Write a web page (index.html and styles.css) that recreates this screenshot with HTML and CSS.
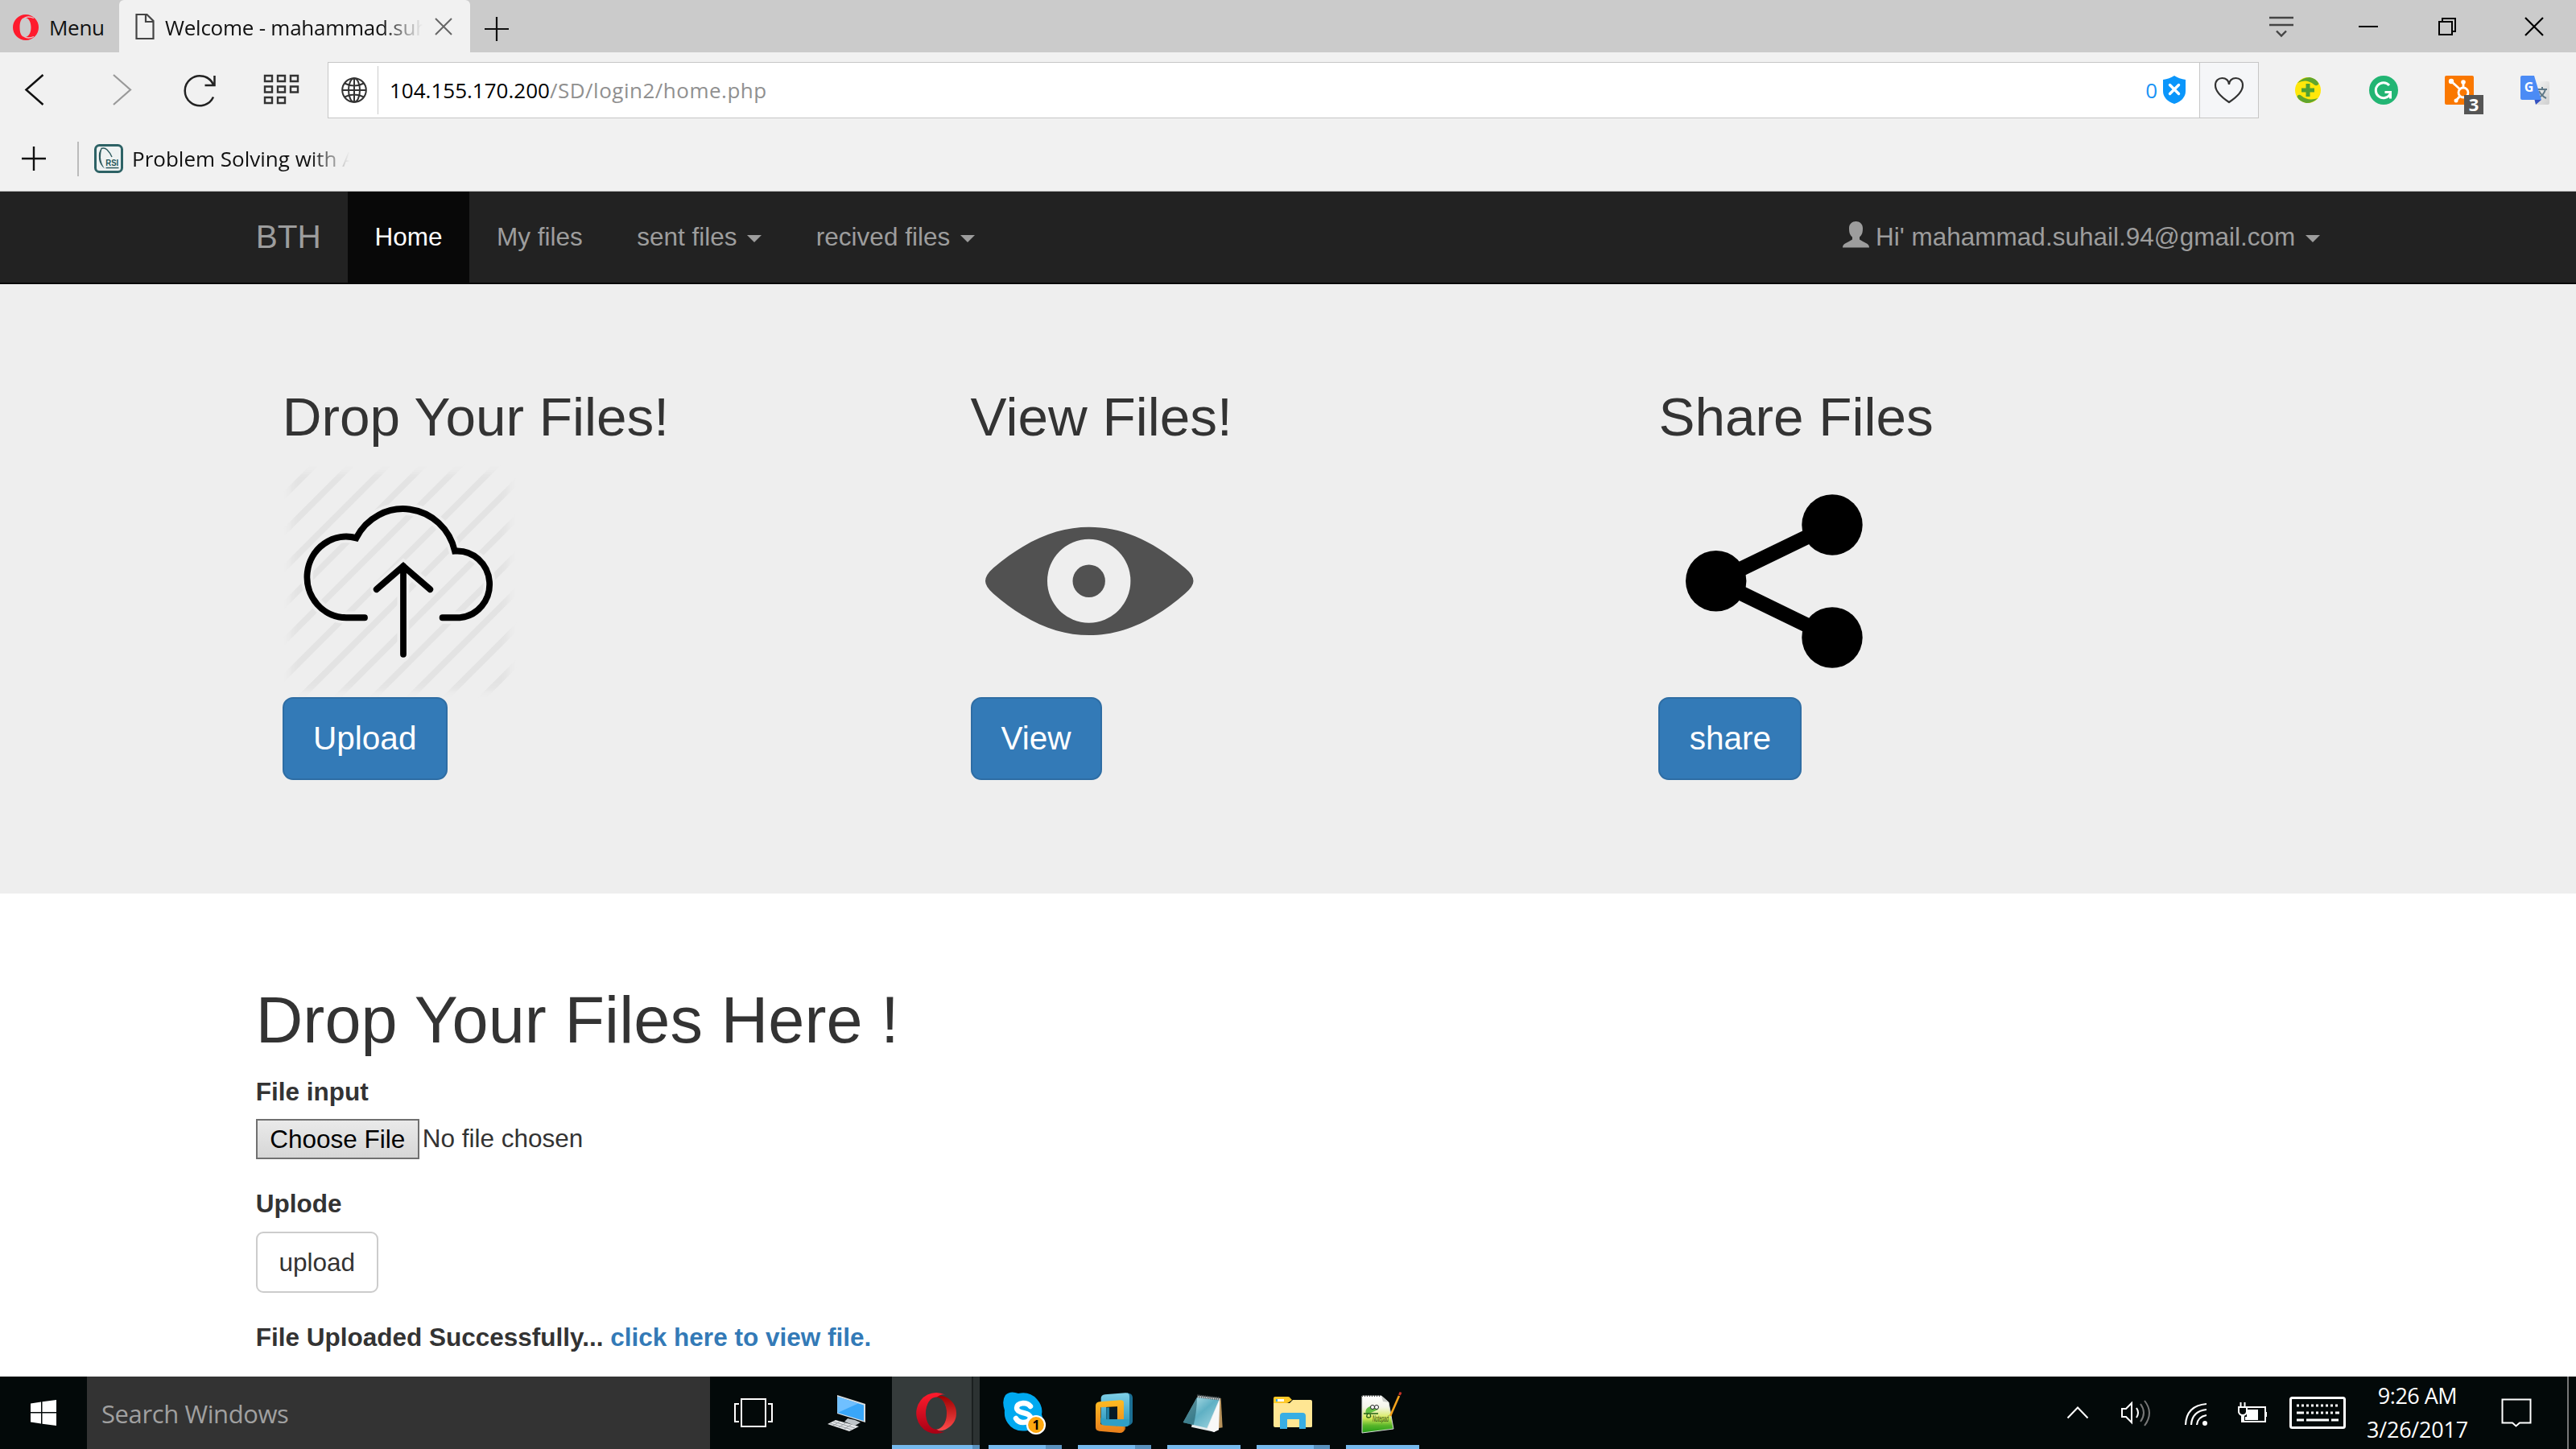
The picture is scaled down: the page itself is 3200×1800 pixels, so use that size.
FILE: index.html
```html
<!DOCTYPE html>
<html lang="en">
<head>
<meta charset="utf-8">
<title>Welcome - mahammad.suhail.94@gmail.com</title>
<link rel="stylesheet" href="styles.css">
</head>
<body>
<div class="screen">

  <header class="browser">
    <div class="tabstrip">
      <div class="menu">
        <svg width="34" height="34" viewBox="0 0 34 34"><path fill="#ff1b2d" fill-rule="evenodd" d="M17 1a16 16 0 1 0 0 32a16 16 0 0 0 0-32zm-1 4c5 0 7.500 6 7.500 12s-2.500 12-7.500 12s-6.500-6-6.500-12s1.500-12 6.500-12z"/><path fill="none" stroke="#e3c4c7" stroke-width="1.300" d="M15 5.500Q20 2.500 27 5.500M15 28.500Q20 31.500 27 28.500"/></svg>
        <span class="ui menu-text">Menu</span>
      </div>
      <div class="tab">
        <svg width="24" height="34" viewBox="0 0 24 34"><path fill="none" stroke="#444" stroke-width="2.200" d="M1.500 2h13l8 8v22h-21zM13 2v9h9"/></svg>
        <span class="ui tab-title">Welcome - mahammad.suh</span>
        <svg width="24" height="24" viewBox="0 0 24 24"><path stroke="#666" stroke-width="2" d="M2 2l20 20M22 2L2 22"/></svg>
      </div>
      <svg class="new-tab" width="32" height="32" viewBox="0 0 32 32"><path stroke="#111" stroke-width="2.200" d="M1 16h30M16 1v30"/></svg>
      <div class="window-controls">
        <svg width="32" height="28" viewBox="2822 19 32 28"><path fill="none" stroke="#444" stroke-width="2.400" d="M2823 22h30M2823 31h30M2832 38.500l6 6 6-6"/></svg>
        <svg width="24" height="4" viewBox="0 0 24 4"><path stroke="#000" stroke-width="2" d="M0 2h24"/></svg>
        <svg width="22" height="22" viewBox="0 0 22 22"><path fill="none" stroke="#000" stroke-width="2" d="M1 5h16v16H1zM5 5V1h16v16h-4"/></svg>
        <svg width="24" height="24" viewBox="0 0 24 24"><path stroke="#000" stroke-width="2.200" d="M1 1l22 22M23 1L1 23"/></svg>
      </div>
    </div>

    <div class="toolbar">
      <svg class="tool-back" width="26" height="40" viewBox="30 92 26 40"><path fill="none" stroke="#111" stroke-width="2.500" d="M53.500 93L32.500 111.500L53.500 130"/></svg>
      <svg class="tool-forward" width="26" height="40" viewBox="138 92 26 40"><path fill="none" stroke="#999" stroke-width="2.200" d="M141 93l21 18.500L141 130"/></svg>
      <svg class="tool-reload" width="42" height="40" viewBox="228 91 42 40"><path fill="none" stroke="#222" stroke-width="2.500" d="M265 119.500A18.500 18.500 0 1 1 265 104M266.500 93v12h-12"/></svg>
      <svg class="tool-grid" width="46" height="38" viewBox="0 0 46 38"><path fill="none" stroke="#333" stroke-width="2.400" d="M2 2h9v7H2zM18 2h9v7h-9zM34 2h9v7h-9zM2 15.500h9v7H2zM18 15.500h9v7h-9zM34 15.500h9v7h-9zM2 29h9v7H2zM18 29h9v7h-9z"/></svg>
      <div class="address">
        <svg class="globe" width="32" height="32" viewBox="0 0 32 32"><g fill="none" stroke="#333" stroke-width="2"><circle cx="16" cy="16" r="14.800"/><ellipse cx="16" cy="16" rx="7" ry="14.800"/><path d="M16 1v30M1.500 16h29M4 7.500q12 6 24 0M4 24.500q12-6 24 0"/></g></svg>
        <span class="address-rule"></span>
        <span class="ui url"><span class="host">104.155.170.200</span><span class="path">/SD/login2/home.php</span></span>
        <span class="ui blocked">0</span>
        <svg class="shield" width="28" height="36" viewBox="0 0 28 36"><path fill="#0b96fb" d="M14 0q6 4 14 5v14q0 11-14 16Q0 30 0 19V5q8-1 14-5z"/><path stroke="#fff" stroke-width="3.400" stroke-linecap="round" d="M8.500 11.500l11 11M19.500 11.500l-11 11"/></svg>
        <span class="heart"><svg width="38" height="34" viewBox="0 0 38 34"><path fill="none" stroke="#333" stroke-width="2.200" d="M19 32C10 26 2 19 2 11C2 5 6 2 10.500 2C15 2 19 5 19 10C19 5 23 2 27.500 2C32 2 36 5 36 11C36 19 28 26 19 32z"/></svg></span>
      </div>
      <div class="extensions">
        <svg width="32" height="32" viewBox="0 0 32 32"><circle cx="16" cy="16" r="16" fill="#ffe70a"/><path fill="#60a52d" d="M3 7Q10 0 18 0Q26 1 29.500 8Q27 12 23.500 9Q14 1 3 7zM2.500 24Q4 20 8 23Q16 30 28.500 26Q22 32 14 32Q5 30 2.500 24z"/><path stroke="#4fa032" stroke-width="5" d="M8 16h16M16 8v16"/></svg>
        <svg width="36" height="36" viewBox="0 0 36 36"><circle cx="18" cy="18" r="18" fill="#22b573"/><path fill="none" stroke="#fff" stroke-width="3" d="M25 12A9.500 9.500 0 1 0 26 23M19.500 20.500h7v8"/></svg>
        <svg width="48" height="60" viewBox="3037 82 48 60"><rect x="3037" y="94" width="36" height="36" rx="2" fill="#fa7800"/><g fill="none" stroke="#fff" stroke-width="2.800"><circle cx="3060" cy="115" r="6"/><path d="M3045 101l11 10M3060 103v6M3056 119l-5 6"/></g><g fill="#fff"><circle cx="3045" cy="101" r="3.200"/><circle cx="3060" cy="102" r="2.800"/><circle cx="3051" cy="125" r="2.500"/></g><rect x="3061" y="118" width="24" height="24" fill="#555"/><text x="3073" y="138" text-anchor="middle" font-family="Open Sans, sans-serif" font-size="22" font-weight="700" fill="#fff">3</text></svg>
        <svg width="36" height="36" viewBox="0 0 36 36"><defs><linearGradient id="sheet" x2="1" y2="1"><stop stop-color="#f5f5f5"/><stop offset="1" stop-color="#cfcfcf"/></linearGradient></defs><path fill="url(#sheet)" d="M18 7h16q2 0 2 2v25q0 2-2 2H20z"/><path fill="none" stroke="#607988" stroke-width="2" d="M21 17h12M27 14v3M31 17q-2 8-10 11M23 19q3 6 9 9"/><path fill="#4b8bf5" d="M2 0h15l9 30H2q-2 0-2-2V2q0-2 2-2z"/><path fill="#3351c0" d="M17.500 30H26l-7 6z"/><text x="10.500" y="20" text-anchor="middle" font-family="Open Sans, sans-serif" font-size="16" font-weight="700" fill="#fff">G</text></svg>
      </div>
    </div>

    <div class="bookmarks">
      <svg width="32" height="32" viewBox="0 0 32 32"><path stroke="#111" stroke-width="2.400" d="M1 16h30M16 1v30"/></svg>
      <span class="bookmark-rule"></span>
      <svg width="36" height="36" viewBox="0 0 36 36"><rect x="1.500" y="1.500" width="33" height="33" rx="5" fill="#eef2f2" stroke="#2d6265" stroke-width="3"/><path fill="none" stroke="#2d5a5e" stroke-width="1.400" d="M8.500 5.500Q13 4 16 7Q20 11 22 16"/><path fill="#2d5a5e" d="M9 5Q5 9 6 19Q7 26 13 30.500Q8.500 24 8 17Q8 9 10 5z"/><text x="22.300" y="26.500" text-anchor="middle" font-family="Liberation Sans, sans-serif" font-size="10.500" font-weight="700" textLength="16" lengthAdjust="spacingAndGlyphs" fill="#1f5558">RSI</text><path stroke="#2d5a5e" stroke-width="1.500" d="M14.500 29.500h16"/></svg>
      <span class="ui bookmark-title">Problem Solving with A</span>
    </div>
  </header>

  <nav class="navbar">
    <div class="container nav-inner">
      <a class="brand">BTH</a>
      <a class="nav-link active">Home</a>
      <a class="nav-link">My files</a>
      <a class="nav-link">sent files <b class="caret"></b></a>
      <a class="nav-link">recived files <b class="caret"></b></a>
      <a class="nav-link user"><svg class="user-icon" width="33" height="33" viewBox="0 0 33 33"><path fill="#9d9d9d" d="M16.500 0C21 0 25 3 25 8.500C25 14 24 17 21 19.500V22.500Q25 25 29 27Q33 28.500 33 32.500H0Q0 28.500 4 27Q8 25 12 22.500V19.500C9 17 8 14 8 8.500C8 3 12 0 16.500 0z"/></svg>Hi' mahammad.suhail.94@gmail.com <b class="caret"></b></a>
    </div>
  </nav>

  <section class="jumbotron">
    <div class="container columns">
      <div class="column">
        <h2>Drop Your Files!</h2>
        <svg class="picture" preserveAspectRatio="none" width="300" height="285" viewBox="351 577 300 276">
          <defs>
            <filter id="soft"><feGaussianBlur stdDeviation="4"/></filter>
            <mask id="edge" maskUnits="userSpaceOnUse" x="340" y="570" width="310" height="290"><rect x="361" y="583" width="271" height="262" fill="#fff" filter="url(#soft)"/></mask>
          </defs>
          <g mask="url(#edge)"><path stroke="#e3e3e3" stroke-width="7.500" d="M340 623l320-310M340 666.800l320-310M340 710.600l320-310M340 754.400l320-310M340 798.200l320-310M340 842l320-310M340 885.800l320-310M340 929.600l320-310M340 973.400l320-310M340 1017.200l320-310M340 1061l320-310M340 1104.800l320-310"/></g>
          <g fill="none" stroke-linecap="round">
            <path stroke="#eee" stroke-width="15" d="M453 757.300H431A48.700 48.700 0 1 1 442.500 661.500A66 66 0 0 1 565 677.300A40 40 0 1 1 571 757.300H549.600M501 803V695.500M467.700 723.300L501 695.500L534.300 723.300"/>
            <path stroke="#000" stroke-width="7.800" d="M453 757.300H431A48.700 48.700 0 1 1 442.500 661.500A66 66 0 0 1 565 677.300A40 40 0 1 1 571 757.300H549.600M501 801.500V695.500M467.700 723.300L501 695.500L534.300 723.300"/>
          </g>
        </svg>
        <a class="btn-lg upload">Upload</a>
      </div>
      <div class="column">
        <h2>View Files!</h2>
        <svg class="picture" preserveAspectRatio="none" width="300" height="285" viewBox="1206 577 300 276">
          <path fill="#515151" d="M1224 713.300Q1224 706 1234 697.500C1278 662 1315 648.500 1353 648.500S1428 662 1472 697.500Q1482.500 706 1482.500 713.300Q1482.500 720 1472 728.500C1428 765 1391 778.500 1353 778.500S1278 765 1234 728.500Q1224 720 1224 713.300z"/>
          <ellipse cx="1352.700" cy="713.300" rx="51.700" ry="50.300" fill="#eee"/><ellipse cx="1352.700" cy="713.300" rx="20.200" ry="19.600" fill="#515151"/>
        </svg>
        <a class="btn-lg view">View</a>
      </div>
      <div class="column">
        <h2>Share Files</h2>
        <svg class="picture" preserveAspectRatio="none" width="300" height="285" viewBox="2061 577 300 276">
          <path fill="none" stroke="#000" stroke-width="18" d="M2277 645.700L2132.700 713.300L2277 781.300"/>
          <ellipse cx="2132.700" cy="713.300" rx="37.700" ry="36.600"/><ellipse cx="2277" cy="645.700" rx="37.700" ry="36.600"/><ellipse cx="2277" cy="781.300" rx="37.700" ry="36.600"/>
        </svg>
        <a class="btn-lg share">share</a>
      </div>
    </div>
  </section>

  <main class="content">
    <div class="container">
      <h1>Drop Your Files Here !</h1>
      <div class="label">File input</div>
      <div class="file-row"><span class="choose">Choose File</span><span class="nofile">No file chosen</span></div>
      <div class="label uplode">Uplode</div>
      <a class="btn-default">upload</a>
      <div class="label result">File Uploaded Successfully... <a class="link">click here to view file.</a></div>
    </div>
  </main>

  <footer class="taskbar">
    <div class="start"><svg width="32" height="32" viewBox="0 0 32 32"><path fill="#fff" d="M0 4.500L13 2.500V15H0zM14.500 2.200L32 0V15H14.500zM0 16.500H13V29.500L0 27.500zM14.500 16.500H32V32L14.500 29.700z"/></svg></div>
    <div class="search ui">Search Windows</div>
    <div class="slot task-view"><svg width="48" height="36" viewBox="0 0 48 36"><path fill="none" stroke="#fff" stroke-width="2" d="M9 1h30v34H9zM6 7H1v22h5M42 7h5v22h-5"/></svg></div>
    <div class="slot pc">
      <svg width="48" height="46" viewBox="1028 1733 48 46"><path fill="#d8dcdf" d="M1040 1733L1075 1744V1767L1040 1756z"/><path fill="#39a6f8" d="M1040.500 1735L1073 1745.500V1765L1040.500 1755z"/><path fill="#70c0ff" d="M1040.500 1735L1066 1743.500L1040.500 1755z"/><path fill="#bfc5c9" d="M1053 1762L1062 1764L1069 1767L1062 1771L1049 1766z"/><path fill="#e4e6e8" d="M1038 1764L1067 1772L1055 1778L1028 1769z"/><path stroke="#999fa3" stroke-width="1" d="M1035 1766l27 8M1031 1768l27 8M1043 1766l-8 5M1050 1768l-8 5M1057 1770l-8 5"/></svg>
    </div>
    <div class="slot app opera">
      <svg width="50" height="51" viewBox="0 0 50 51"><defs><linearGradient id="ol" x2="0" y2="1"><stop stop-color="#ff1b2d"/><stop offset="1" stop-color="#a70014"/></linearGradient><linearGradient id="or" x2="0" y2="1"><stop stop-color="#9c0000"/><stop offset="1" stop-color="#ff4b4b"/></linearGradient></defs><path fill="url(#or)" d="M17 9Q25 1 36 5Q50 12 50 25.500T36 46Q25 50 17 42z"/><path fill="url(#ol)" fill-rule="evenodd" d="M25 0A25 25.500 0 1 0 36 48.500Q31 50 25 45Q38 42 38 25.500T25 6Q31 1 36 2.500Q31 0 25 0z"/><ellipse cx="25" cy="25.500" rx="13" ry="20" fill="#353b3b"/></svg>
      <span class="underline"></span>
    </div>
    <div class="slot app stacked">
      <svg width="54" height="53" viewBox="1247 1729 54 53"><path fill="#00a9f0" d="M1250 1733Q1256 1727 1266 1731Q1280 1728 1289 1738Q1297 1747 1295 1757Q1299 1768 1294 1775Q1286 1781 1278 1777Q1261 1780 1253 1768Q1248 1761 1249 1752Q1245 1740 1250 1733z"/><path fill="none" stroke="#fff" stroke-width="6.500" stroke-linecap="round" d="M1281 1747Q1278 1743 1272 1743Q1264 1744 1264 1749Q1264 1753 1272 1755Q1281 1757 1281 1761Q1280 1767 1272 1767Q1266 1767 1263 1762"/><circle cx="1288" cy="1770" r="11" fill="#ffa810" stroke="#fff" stroke-width="2.200"/><text x="1288" y="1776" text-anchor="middle" font-family="Open Sans, sans-serif" font-size="16" font-weight="700">1</text></svg>
      <span class="underline"></span>
    </div>
    <div class="slot app stacked">
      <svg width="48" height="50" viewBox="62 44 144 150">
        <defs>
          <linearGradient id="vb" x2="0" y2="1"><stop stop-color="#7fcfe6"/><stop offset="1" stop-color="#2595bd"/></linearGradient>
          <linearGradient id="vo" x2="0" y2="1"><stop stop-color="#fdbb22"/><stop offset="1" stop-color="#e87f1c"/></linearGradient>
        </defs>
        <path fill="#1b6f94" d="M182 45q21 2 21 18v88q0 10-20 19z"/>
        <path fill="#c86d14" d="M160 165h16v14q-5 14-22 14z"/>
        <path fill="url(#vb)" fill-rule="evenodd" d="M100 51L176 45q15-1 15 13v96q0 14-15 16L98 166q-13-1-13-13V65q0-12 15-14zM105 78v66h57V74z"/>
        <path fill="url(#vo)" fill-rule="evenodd" d="M80 78L158 72q12 0 12 10V184q0 9-16 10L78 187q-13-2-13-14V93q0-13 15-15zM84 99V162l62 6V96z"/>
        <path fill="#1f7fa5" d="M105 99h12v45h-12z"/>
        <path fill="#061a26" d="M117 99h29v44h-29z"/>
        <path fill="#2f9fc5" d="M84 138l21 6 85-1v14q0 12-14 14L98 166q-14-1-14-13z"/>
      </svg>
      <span class="underline"></span>
    </div>
    <div class="slot app notepad">
      <svg width="50" height="49" viewBox="383 50 150 147">
        <defs><linearGradient id="np" x2="1" y2="1"><stop stop-color="#c7eaf0"/><stop offset=".5" stop-color="#5fb0c4"/><stop offset="1" stop-color="#a5d8e2"/></linearGradient></defs>
        <path fill="#b7925b" d="M518 68h8L532 177l-14 2z"/>
        <path fill="#e6ebec" d="M440 58L522 68L503 194L416 175z"/>
        <path fill="#f8f8f8" d="M522 72L518 186L500 194L476 182z"/>
        <path fill="url(#np)" d="M437 64L519 74L474 179L385 158z"/>
        <path fill="#28636f" opacity=".65" d="M437 64L385 158L424 168Q436 120 437 64z"/>
        <path stroke="#596265" stroke-width="12" stroke-dasharray="4 3" d="M438 60L523 70"/>
      </svg>
      <span class="underline"></span>
    </div>
    <div class="slot app stacked">
      <svg width="48" height="41" viewBox="0 0 48 41"><path fill="#ffe693" d="M0 8h20l4-4h22q2 0 2 2v31q0 1-2 1H2q-2 0-2-2z"/><path fill="#ffc928" d="M0 8V2q0-2 2-2h16q2 0 3 2l2 2-4 3q-1 1-3 1z"/><path fill="#fff" d="M3 3h10v3H3z"/><path fill="#38aee4" d="M3 3h2v3H3zM8 40V24q0-4 4-4h24q4 0 4 4v16h-8V28H17v12z"/></svg>
      <span class="underline"></span>
    </div>
    <div class="slot app">
      <svg width="52" height="52" viewBox="1692 1729 52 52"><defs><linearGradient id="npp" x2="0" y2="1"><stop stop-color="#fff"/><stop offset=".3" stop-color="#f4f5ea"/><stop offset=".6" stop-color="#d5ea59"/><stop offset=".8" stop-color="#58b52a"/><stop offset="1" stop-color="#219a16"/></linearGradient></defs><path fill="url(#npp)" stroke="#d8dcd8" stroke-width="1" d="M1693 1734L1717 1734L1726 1742L1732 1775L1693 1780z"/><path fill="#c9cbc8" d="M1717 1734L1726 1742L1719 1741z"/><path stroke="#444" stroke-width="2" stroke-dasharray="1 2" d="M1693 1734h24"/><path fill="#63bf42" d="M1698 1751Q1702 1745 1709 1747L1713 1751L1704 1755L1700 1757Q1696 1756 1698 1751z"/><path fill="none" stroke="#246013" stroke-width="1.400" d="M1695 1756h18M1700 1756q-3 5 1 5t2-4"/><circle cx="1706" cy="1748" r="2.500" fill="#fff" stroke="#222"/><circle cx="1711" cy="1748" r="2.500" fill="#fff" stroke="#222"/><text x="1706" y="1766" font-family="Liberation Sans, sans-serif" font-size="10" font-style="italic" textLength="20" lengthAdjust="spacingAndGlyphs" fill="#31480f">Notepad</text><path stroke="#f5a31c" stroke-width="2.600" d="M1728 1759L1739 1734"/><path stroke="#c83328" stroke-width="3" d="M1739.500 1733L1741 1729.500"/></svg>
      <span class="underline"></span>
    </div>

    <div class="tray">
      <svg width="28" height="16" viewBox="0 0 28 16"><path fill="none" stroke="#fff" stroke-width="2" d="M1.500 14.500L14 1.500L26.500 14.500"/></svg>
      <svg width="38" height="34" viewBox="2634 1738 38 34"><g fill="none" stroke="#fff" stroke-width="2"><path d="M2636 1750h5l7-7v24l-7-7h-5z"/><path d="M2654 1749q4 6 0 12"/><g stroke="#777"><path d="M2659 1744q8 11 0 22M2664 1740q12 15 0 31"/></g></g></svg>
      <svg width="30" height="30" viewBox="2713 1742 30 30"><g fill="none" stroke="#fff" stroke-width="2.200"><path d="M2715 1770Q2716 1746 2741 1744M2722 1770Q2723 1753 2741 1751M2729 1770Q2730 1760 2741 1758"/></g><circle cx="2739" cy="1768" r="3" fill="#fff"/></svg>
      <svg width="38" height="28" viewBox="2779 1740 38 28"><path fill="none" stroke="#fff" stroke-width="2" d="M2790 1747h24v18h-26M2815 1753v6"/><path fill="#fff" d="M2791 1750h14v13h-16v-4h2zM2784 1755h4v11h-4z"/><path fill="#050a0a" stroke="#fff" stroke-width="2" d="M2781 1747h10v6q-1 4-5 4t-5-4zM2783.500 1747v-6M2788.500 1747v-6"/></svg>
      <svg width="70" height="40" viewBox="0 0 70 40"><rect x="1.500" y="1.500" width="67" height="37" rx="2" fill="none" stroke="#fff" stroke-width="3"/><g stroke="#fff" stroke-width="3"><path stroke-dasharray="3 3" d="M9 11h53"/><path stroke-dasharray="9 3 3 3 3 3 3 3 3 3 3 3 3 3 9" d="M9 20h53"/><path d="M9 29h9M21 29h28M52 29h9"/></g></svg>
      <div class="clock ui"><span class="time">9:26 AM</span><span class="date">3/26/2017</span></div>
      <svg width="38" height="36" viewBox="0 0 38 36"><path fill="none" stroke="#fff" stroke-width="2" d="M1.500 1.500h35v29H23l-4.500 4-4.500-4H1.500z"/></svg>
      <span class="peek"></span>
    </div>
  </footer>
</div>
</body>
</html>
```
FILE: styles.css
```css
* { box-sizing: border-box; }
body { margin: 0; font-family: "Liberation Sans", Arial, sans-serif; font-size: 31.5px; line-height: 45px; color: #333; background: #fff; }
svg { display: block; flex: none; overflow: visible; }
h1, h2 { margin: 0; font-weight: 400; }
.screen { width: 3200px; height: 1800px; overflow: hidden; display: flex; flex-direction: column; }
.ui { font-family: "Open Sans", sans-serif; font-size: 26px; line-height: 36px; white-space: nowrap; }

/* Browser chrome */
.browser { height: 238px; flex: none; background: #f1f1f1; border-bottom: 1px solid #bbb; }
.tabstrip { height: 65px; background: #cbcbcb; display: flex; align-items: center; }
.menu { width: 148px; padding-left: 15px; display: flex; align-items: center; gap: 12px; color: #111; padding-top: 3px; }
.menu-text { letter-spacing: -0.3px; }
.tab { width: 436px; height: 65px; padding-left: 20px; display: flex; align-items: center; background: #f1f1f1; border-radius: 6px 6px 0 0; color: #111; }
.tab-title { width: 320px; margin: 2px 14px 0 13px; letter-spacing: -0.25px; mask-image: linear-gradient(90deg, #000 84%, transparent 100%); }
.new-tab { margin: 7px 0 0 17px; }
.window-controls { margin-left: auto; padding-right: 40px; display: flex; align-items: center; gap: 80px; }
.window-controls svg:nth-child(3) { margin: 0 5px 0 -5px; }

.toolbar { height: 94px; display: flex; align-items: center; }
.tool-back { margin-left: 30px; }
.tool-forward { margin-left: 82px; }
.tool-reload { margin-left: 64px; }
.tool-grid { margin: -2px 34px 0 57px; }
.address { width: 2399px; height: 70px; display: flex; align-items: center; background: #fff; border: 1px solid #c6c6c6; }
.globe { margin-left: 16px; }
.address-rule { width: 1px; height: 60px; margin-left: 13px; background: #ccc; }
.url { margin-left: 14px; }
.host { color: #000; }
.path { color: #909090; letter-spacing: 0.5px; }
.blocked { margin-left: auto; color: #1a93f5; }
.shield { margin: 0 17px 0 7px; }
.heart { width: 73px; height: 68px; background: #f5f6f8; border-left: 1px solid #c6c6c6; display: flex; align-items: center; justify-content: center; }
.extensions { display: flex; align-items: center; margin-left: 45px; gap: 58px; }
.extensions svg:nth-child(1) { margin-right: 2px; }
.extensions svg:nth-child(4) { margin-left: -12px; }

.bookmarks { height: 78px; display: flex; align-items: center; padding-left: 26px; padding-bottom: 2px; }
.bookmark-rule { width: 2px; height: 43px; background: #bbb; margin: 0 19px 0 38px; }
.bookmark-title { width: 270px; margin-left: 11px; color: #111; mask-image: linear-gradient(90deg, #000 82%, transparent 100%); }

/* Page */
.container { width: 2632px; margin: 0 auto; padding: 0 33.75px; }
.navbar { height: 115px; flex: none; background: #222; border-bottom: 2px solid #080808; }
.nav-inner { display: flex; line-height: 113px; color: #9d9d9d; white-space: nowrap; }
.brand { font-size: 40.5px; padding-right: 33px; }
.nav-link { padding: 0 33.75px; }
.nav-link.active { background: #080808; color: #fff; }
.caret { display: inline-block; margin-left: 4px; vertical-align: middle; border-top: 9px solid; border-left: 9px solid transparent; border-right: 9px solid transparent; }
.user { margin-left: auto; margin-right: -33.75px; display: flex; align-items: center; }
.user-icon { margin: -7px 8px 0 0; }
.user .caret { margin: 4px 0 0 13px; }

.jumbotron { height: 757px; flex: none; background: #eee; padding-top: 128px; }
.columns { display: flex; }
.column { flex: 1; padding: 0 33.75px 0 33px; }
h2 { font-size: 67.5px; line-height: 74px; margin-bottom: 26px; }
.btn-lg { display: flex; align-items: center; justify-content: center; height: 103px; background: #337ab7; border: 2px solid #2e6da4; border-radius: 13px; color: #fff; font-size: 40.5px; }
.upload { width: 205px; }
.view { width: 163px; }
.share { width: 178px; }

.content { flex: 1; padding-top: 113px; background: #fff; }
h1 { font-size: 81px; line-height: 89px; margin-bottom: 22px; letter-spacing: 0.1px; }
.label { font-weight: 700; }
.file-row { display: flex; margin-top: 11px; height: 50px; line-height: 48px; }
.choose { width: 203px; line-height: 46px; text-align: center; color: #000; border: 2px solid #707070; background: linear-gradient(#eaeaea, #d6d6d6); }
.nofile { margin-left: 4px; }
.uplode { margin: 33px 0 12px; }
.btn-default { display: flex; align-items: center; justify-content: center; width: 152px; height: 76px; border: 2px solid #ccc; border-radius: 9px; }
.result { margin-top: 33px; }
.link { color: #337ab7; }

/* Taskbar */
.taskbar { height: 90px; flex: none; display: flex; background: #030909; color: #fff; }
.start { width: 108px; display: flex; align-items: center; justify-content: center; }
.search { width: 774px; background: #333; color: #a0a0a0; padding-left: 18px; font-size: 31px; line-height: 92px; letter-spacing: -0.4px; }
.slot { display: flex; align-items: center; justify-content: center; position: relative; }
.task-view { width: 108px; }
.pc { width: 118px; padding-left: 5px; padding-top: 2px; }
.app { width: 111px; padding-right: 3px; }
.notepad { padding-right: 6px; }
.opera { width: 109px; margin-right: 2px; padding-right: 0; background: linear-gradient(90deg, #353b3b 99px, #1a1f1f 99px, #1a1f1f 101px, #2c3232 101px); }
.underline { position: absolute; left: 9px; bottom: 0; width: 91px; height: 5px; background: #76b9ed; }
.opera .underline { left: 0; width: 109px; background: linear-gradient(90deg, #76b9ed 100px, #5a91be 100px); }
.stacked .underline { background: linear-gradient(90deg, #76b9ed 71px, #5a91be 71px); }
.tray { flex: 1; display: flex; align-items: center; justify-content: flex-end; }
.tray svg:nth-of-type(2) { margin-left: 39px; }
.tray svg:nth-of-type(3) { margin-left: 41px; margin-top: 4px; }
.tray svg:nth-of-type(4) { margin-left: 36px; }
.tray svg:nth-of-type(5) { margin-left: 27px; }
.clock { width: 140px; margin: 0 34px 0 19px; display: flex; flex-direction: column; align-items: center; line-height: 42px; font-size: 27px; letter-spacing: -0.5px; }
.date { letter-spacing: -0.2px; }
.peek { width: 2px; height: 90px; background: #777; margin: 0 9px 0 44px; }
```
